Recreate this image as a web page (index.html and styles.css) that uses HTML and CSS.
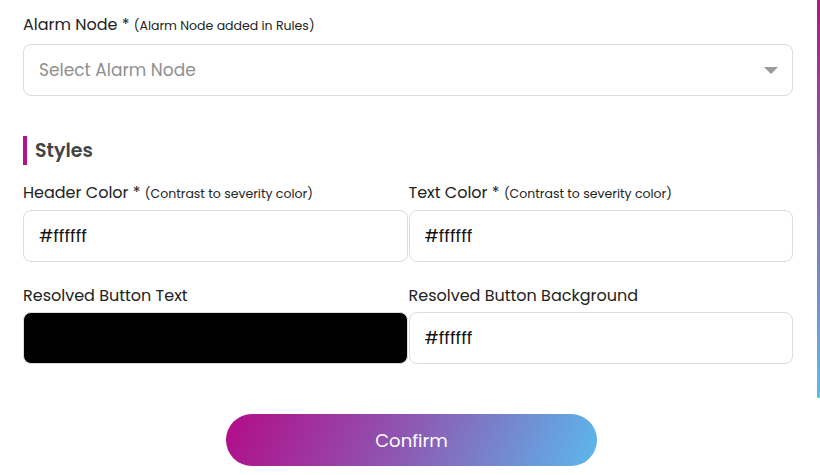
FILE: index.html
```html
<!DOCTYPE html>
<html lang="en">
<head>
    <meta charset="UTF-8">
    <meta name="viewport" content="width=device-width, initial-scale=1.0">
    <title>Alarm Settings</title>
    <link rel="stylesheet" href="styles.css">
</head>
<body>

    <div class="scroll-thumb"></div>

    <form class="alarm-form">
        <!-- Alarm node -->
        <div class="field">
            <label>Alarm Node * <small>(Alarm Node added in Rules)</small></label>
            <div class="select-box">
                <span class="placeholder">Select Alarm Node</span>
                <span class="caret"></span>
            </div>
        </div>

        <h2 class="section-title">Styles</h2>

        <div class="field-row">
            <div class="field">
                <label>Header Color * <small>(Contrast to severity color)</small></label>
                <input type="text" value="#ffffff">
            </div>
            <div class="field">
                <label>Text Color * <small>(Contrast to severity color)</small></label>
                <input type="text" value="#ffffff">
            </div>
        </div>

        <div class="field-row">
            <div class="field">
                <label>Resolved Button Text</label>
                <div class="swatch"></div>
            </div>
            <div class="field">
                <label>Resolved Button Background</label>
                <input type="text" value="#ffffff">
            </div>
        </div>

        <div class="actions">
            <button type="button" class="confirm-btn">Confirm</button>
        </div>
    </form>

</body>
</html>
```

FILE: styles.css
```css
body {
    margin: 0;
    background: #fff;
    font-family: "Poppins", "Open Sans", Arial, sans-serif;
    color: #222;
    overflow: hidden;
}
.scroll-thumb {
    position: absolute;
    top: 0;
    right: 0;
    width: 3px;
    height: 398px;
    border-radius: 0 0 2px 2px;
    background: linear-gradient(180deg, #b0168e, #8a62b8 45%, #58bdec);
}
.alarm-form {
    padding: 13px 27px 0 23px;
}
.field {
    display: flex;
    flex-direction: column;
}
.field label {
    font-size: 16px;
    line-height: 24px;
    margin-bottom: 6px;
    color: #222;
    white-space: nowrap;
}
.field label small {
    font-size: 12.5px;
}
.select-box {
    height: 52px;
    box-sizing: border-box;
    border: 1px solid #dcdcdc;
    border-radius: 8px;
    display: flex;
    align-items: center;
    justify-content: space-between;
    padding: 0 14px 0 15px;
}
.placeholder {
    font-size: 17px;
    color: #8f8f8f;
}
.caret {
    width: 0;
    height: 0;
    border-left: 7px solid transparent;
    border-right: 7px solid transparent;
    border-top: 7px solid #9a9a9a;
}
.section-title {
    margin: 40px 0 16px;
    font-size: 19px;
    font-weight: 600;
    color: #444;
    border-left: 4px solid #b4138a;
    padding-left: 8px;
    line-height: 29px;
}
.field-row {
    display: grid;
    grid-template-columns: 1fr 1fr;
    gap: 1px;
    margin-bottom: 22px;
}
.field-row label {
    margin-bottom: 4px;
}
input {
    height: 52px;
    box-sizing: border-box;
    border: 1px solid #dcdcdc;
    border-radius: 8px;
    padding: 0 15px;
    font-family: inherit;
    font-size: 17px;
    color: #111;
    outline: none;
}
.swatch {
    height: 52px;
    border: 1px solid #dcdcdc;
    border-radius: 8px;
    background: #000;
    box-sizing: border-box;
}
.actions {
    display: flex;
    justify-content: center;
    padding: 28px 0 0 7px;
}
.confirm-btn {
    width: 371px;
    height: 52px;
    border: none;
    border-radius: 26px;
    background: linear-gradient(112deg, #b20c88, #8c5bb4 50%, #5bb8ec);
    color: #fff;
    font-family: inherit;
    font-size: 18px;
    cursor: pointer;
}
```
